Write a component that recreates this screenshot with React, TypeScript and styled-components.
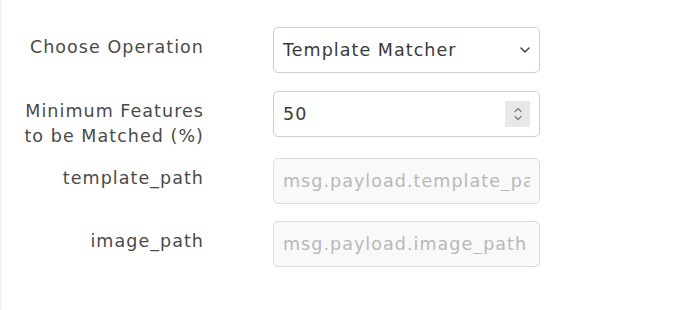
import styled, { createGlobalStyle } from 'styled-components';

const GlobalStyle = createGlobalStyle`
	html, body {
		margin: 0;
		padding: 0;
		background: #ffffff;
	}
	body {
		font-family: 'DejaVu Sans', 'Open Sans', 'Liberation Sans', sans-serif;
	}
`;

const ChevronDown = () => (
	<svg width="10" height="6" viewBox="0 0 10 6" fill="none">
		<path d="M1 1l4 4 4-4" stroke="#444" strokeWidth="1.6" strokeLinecap="round" strokeLinejoin="round" />
	</svg>
);

const SpinIcon = () => (
	<svg width="10" height="18" viewBox="0 0 10 18" fill="none">
		<path d="M2 6.5l3-3 3 3" stroke="#7a7a7a" strokeWidth="1.2" strokeLinecap="round" strokeLinejoin="round" />
		<path d="M2 11.5l3 3 3-3" stroke="#7a7a7a" strokeWidth="1.2" strokeLinecap="round" strokeLinejoin="round" />
	</svg>
);

export default function App() {
	return (
		<Panel>
			<GlobalStyle />
			<Row $height={46}>
				<Label>Choose Operation</Label>
				<Field>
					<Value>Template Matcher</Value>
					<ChevronDown />
				</Field>
			</Row>
			<Row $height={49}>
				<Label>
					Minimum Features
					<br />
					to be Matched (%)
				</Label>
				<Field>
					<NumberInput type="text" defaultValue="50" />
					<Spinner>
						<SpinIcon />
					</Spinner>
				</Field>
			</Row>
			<Row $height={45}>
				<Label>template_path</Label>
				<Field $disabled>
					<Placeholder>msg.payload.template_path</Placeholder>
				</Field>
			</Row>
			<Row $height={45}>
				<Label>image_path</Label>
				<Field $disabled>
					<Placeholder>msg.payload.image_path</Placeholder>
				</Field>
			</Row>
		</Panel>
	);
}

const Panel = styled.div`
	box-sizing: border-box;
	width: 681px;
	height: 310px;
	padding: 27px 0 0 22px;
	border-left: 2px solid #f4f4f4;
	display: flex;
	flex-direction: column;
	gap: 18px;
`;

const Row = styled.div<{ $height: number }>`
	display: grid;
	grid-template-columns: 180px 267px;
	column-gap: 69px;
	align-items: start;
	height: ${(p) => p.$height}px;
`;

const Label = styled.div`
	padding-top: 8px;
	text-align: right;
	font-size: 17.5px;
	line-height: 25px;
	letter-spacing: 1.05px;
	color: #4a4a4a;
	white-space: nowrap;
`;

const Field = styled.div<{ $disabled?: boolean }>`
	box-sizing: border-box;
	height: 46px;
	display: flex;
	align-items: center;
	gap: 8px;
	padding: 0 9px 0 9px;
	border: 1px solid ${(p) => (p.$disabled ? '#dcdcdc' : '#cfcfcf')};
	border-radius: 5px;
	background: ${(p) => (p.$disabled ? '#f9f9f9' : '#ffffff')};
	overflow: hidden;
	font-size: 17.5px;
	letter-spacing: 1.05px;
`;

const Value = styled.span`
	flex: 1;
	color: #3a3a3a;
	white-space: nowrap;
`;

const NumberInput = styled.input`
	flex: 1;
	min-width: 0;
	border: none;
	outline: none;
	padding: 0;
	background: transparent;
	font: inherit;
	letter-spacing: inherit;
	color: #3a3a3a;
`;

const Spinner = styled.div`
	width: 25px;
	height: 26px;
	display: flex;
	align-items: center;
	justify-content: center;
	background: #e8e8e8;
`;

const Placeholder = styled.span`
	flex: 1;
	min-width: 0;
	overflow: hidden;
	white-space: nowrap;
	color: #b8b8b8;
`;
